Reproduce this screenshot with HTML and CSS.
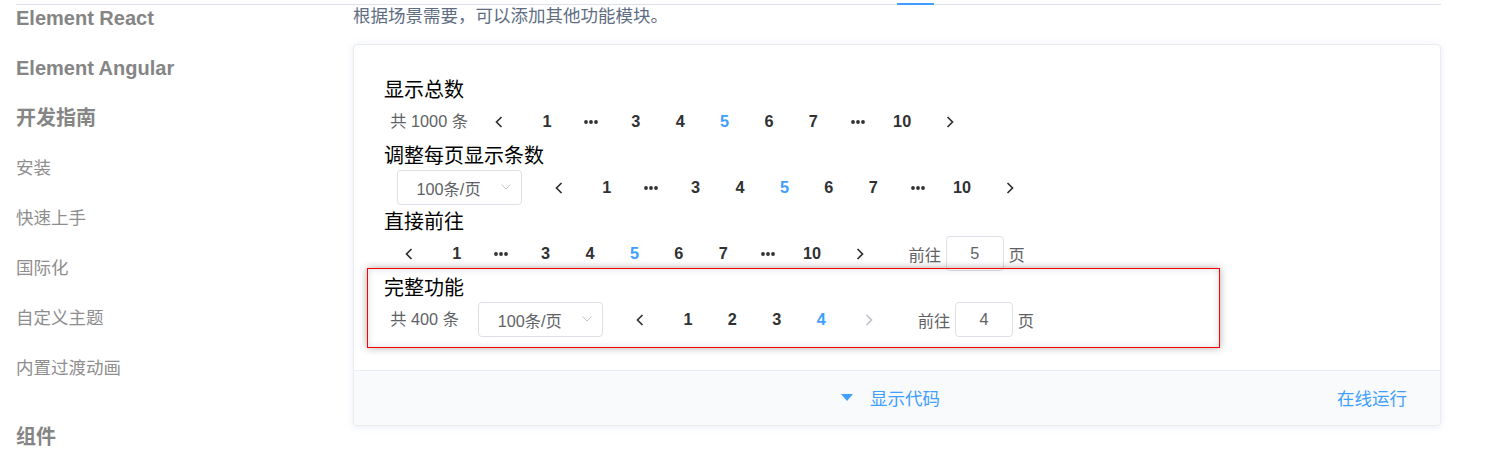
FILE: index.html
```html
<!DOCTYPE html>
<html lang="zh-CN">
<head>
<meta charset="utf-8">
<title>Pagination</title>
<link rel="stylesheet" href="styles.css">
</head>
<body>
<div class="tabs-line"><div class="tabs-active"></div></div>
<div class="page">
  <nav class="side-nav">
    <a class="nav-head">Element React</a>
    <a class="nav-head">Element Angular</a>
    <a class="nav-head">开发指南</a>
    <a class="nav-link">安装</a>
    <a class="nav-link">快速上手</a>
    <a class="nav-link">国际化</a>
    <a class="nav-link">自定义主题</a>
    <a class="nav-link">内置过渡动画</a>
    <a class="nav-head nav-group">组件</a>
  </nav>
  <main class="main">
    <p class="intro">根据场景需要，可以添加其他功能模块。</p>
    <div class="demo-block">
      <div class="source">
        <div class="block">
          <div class="demo-title">显示总数</div>
          <div class="pagination">
            <span class="total">共 1000 条</span>
            <span class="btn btn-prev"><svg class="chev" viewBox="0 0 8 12"><path d="M6.5 1 L1.5 6 L6.5 11"/></svg></span>
            <ul class="pager">
              <li>1</li>
              <li class="more"><svg class="dots" viewBox="0 0 14 4"><circle cx="2" cy="2" r="1.9"/><circle cx="7" cy="2" r="1.9"/><circle cx="12" cy="2" r="1.9"/></svg></li>
              <li>3</li><li>4</li><li class="active">5</li><li>6</li><li>7</li>
              <li class="more"><svg class="dots" viewBox="0 0 14 4"><circle cx="2" cy="2" r="1.9"/><circle cx="7" cy="2" r="1.9"/><circle cx="12" cy="2" r="1.9"/></svg></li>
              <li>10</li>
            </ul>
            <span class="btn btn-next"><svg class="chev" viewBox="0 0 8 12"><path d="M1.5 1 L6.5 6 L1.5 11"/></svg></span>
          </div>
        </div>
        <div class="block">
          <div class="demo-title">调整每页显示条数</div>
          <div class="pagination">
            <span class="sizes"><span class="select"><span>100条/页</span><svg class="caret" viewBox="0 0 10 6"><path d="M0.5 0.5 L5 5 L9.5 0.5"/></svg></span></span>
            <span class="btn btn-prev"><svg class="chev" viewBox="0 0 8 12"><path d="M6.5 1 L1.5 6 L6.5 11"/></svg></span>
            <ul class="pager">
              <li>1</li>
              <li class="more"><svg class="dots" viewBox="0 0 14 4"><circle cx="2" cy="2" r="1.9"/><circle cx="7" cy="2" r="1.9"/><circle cx="12" cy="2" r="1.9"/></svg></li>
              <li>3</li><li>4</li><li class="active">5</li><li>6</li><li>7</li>
              <li class="more"><svg class="dots" viewBox="0 0 14 4"><circle cx="2" cy="2" r="1.9"/><circle cx="7" cy="2" r="1.9"/><circle cx="12" cy="2" r="1.9"/></svg></li>
              <li>10</li>
            </ul>
            <span class="btn btn-next"><svg class="chev" viewBox="0 0 8 12"><path d="M1.5 1 L6.5 6 L1.5 11"/></svg></span>
          </div>
        </div>
        <div class="block">
          <div class="demo-title">直接前往</div>
          <div class="pagination">
            <span class="btn btn-prev"><svg class="chev" viewBox="0 0 8 12"><path d="M6.5 1 L1.5 6 L6.5 11"/></svg></span>
            <ul class="pager">
              <li>1</li>
              <li class="more"><svg class="dots" viewBox="0 0 14 4"><circle cx="2" cy="2" r="1.9"/><circle cx="7" cy="2" r="1.9"/><circle cx="12" cy="2" r="1.9"/></svg></li>
              <li>3</li><li>4</li><li class="active">5</li><li>6</li><li>7</li>
              <li class="more"><svg class="dots" viewBox="0 0 14 4"><circle cx="2" cy="2" r="1.9"/><circle cx="7" cy="2" r="1.9"/><circle cx="12" cy="2" r="1.9"/></svg></li>
              <li>10</li>
            </ul>
            <span class="btn btn-next"><svg class="chev" viewBox="0 0 8 12"><path d="M1.5 1 L6.5 6 L1.5 11"/></svg></span>
            <span class="jump">前往<span class="editor">5</span>页</span>
          </div>
        </div>
        <div class="block">
          <div class="demo-title">完整功能</div>
          <div class="pagination">
            <span class="total">共 400 条</span>
            <span class="sizes"><span class="select"><span>100条/页</span><svg class="caret" viewBox="0 0 10 6"><path d="M0.5 0.5 L5 5 L9.5 0.5"/></svg></span></span>
            <span class="btn btn-prev"><svg class="chev" viewBox="0 0 8 12"><path d="M6.5 1 L1.5 6 L6.5 11"/></svg></span>
            <ul class="pager">
              <li>1</li><li>2</li><li>3</li><li class="active">4</li>
            </ul>
            <span class="btn btn-next is-disabled"><svg class="chev" viewBox="0 0 8 12"><path d="M1.5 1 L6.5 6 L1.5 11"/></svg></span>
            <span class="jump">前往<span class="editor">4</span>页</span>
          </div>
        </div>
      </div>
      <div class="control">
        <span class="control-main"><svg class="caret-bottom" viewBox="0 0 12 7"><path d="M0 0 H12 L6 7 Z"/></svg><span class="control-text">显示代码</span></span>
        <span class="control-run">在线运行</span>
      </div>
      <div class="highlight"></div>
    </div>
  </main>
</div>
</body>
</html>
```
FILE: styles.css
```css
html, body {
  margin: 0;
  padding: 0;
  background: #fff;
  overflow: hidden;
}
body {
  font-family: "Liberation Sans", "Noto Sans CJK SC", sans-serif;
  color: #303133;
}

.tabs-line {
  position: fixed;
  top: 4px;
  left: 16px;
  width: 1425px;
  height: 1px;
  background: #dcdfe6;
  z-index: 2;
}
.tabs-active {
  margin-left: 881px;
  margin-top: -1px;
  width: 37px;
  height: 2px;
  background: #409eff;
}

.page {
  display: grid;
  grid-template-columns: 337px 1088px;
  padding-left: 16px;
}

.side-nav {
  display: flex;
  flex-direction: column;
  margin-top: -7px;
}
.nav-head {
  font-size: 20px;
  line-height: 50px;
  font-weight: bold;
  color: #858585;
}
.nav-link {
  font-size: 17.5px;
  line-height: 50px;
  color: #8e8e8e;
}
.nav-group {
  margin-top: 19px;
}

.intro {
  margin: 3px 0 15px;
  font-size: 17.5px;
  line-height: 26px;
  color: #5e6d82;
}

.demo-block {
  position: relative;
  border: 1px solid #ebebeb;
  border-radius: 4px;
  background: #fff;
  box-shadow: 0 0 8px 0 rgba(232, 237, 250, 0.6), 0 2px 4px 0 rgba(232, 237, 250, 0.5);
}
.source {
  padding: 33.5px 30px 30px 30px;
}
.block + .block {
  margin-top: 3px;
}
.demo-title {
  font-size: 20px;
  line-height: 23px;
  color: #000;
}

.pagination {
  display: flex;
  align-items: flex-start;
  padding: 2.5px 6.25px;
  font-size: 16.25px;
  font-weight: bold;
  color: #303133;
  white-space: nowrap;
}
.total {
  margin-right: 12.5px;
  font-weight: normal;
  color: #606266;
  height: 35px;
  line-height: 35px;
}
.btn {
  box-sizing: border-box;
  min-width: 44.4px;
  height: 35px;
  padding: 0 7.5px;
  display: flex;
  align-items: center;
  justify-content: center;
  color: #303133;
}
.btn-prev { padding-right: 15px; }
.btn-next { padding-left: 15px; }
.btn.is-disabled { color: #c0c4cc; }
.chev {
  width: 8px;
  height: 12px;
  fill: none;
  stroke: currentColor;
  stroke-width: 1.7;
}

.pager {
  display: flex;
  margin: 0;
  padding: 0;
  list-style: none;
}
.pager li {
  box-sizing: border-box;
  min-width: 44.4px;
  height: 35px;
  line-height: 35px;
  padding: 0 5px;
  text-align: center;
}
.pager li.active { color: #409eff; }
.pager li.more {
  display: flex;
  align-items: center;
  justify-content: center;
}
.dots {
  width: 14px;
  height: 4px;
  fill: #303133;
}

.sizes {
  margin-right: 12.5px;
}
.select {
  box-sizing: border-box;
  width: 125px;
  height: 35px;
  margin: 0 6.25px;
  padding: 0 10px 0 19px;
  border: 1px solid #dcdfe6;
  border-radius: 3.75px;
  display: flex;
  align-items: center;
  justify-content: space-between;
  font-weight: normal;
  color: #606266;
}
.caret {
  width: 10px;
  height: 6px;
  margin-top: -1px;
  fill: none;
  stroke: #c0c4cc;
  stroke-width: 1;
}

.jump {
  margin-left: 30px;
  display: flex;
  align-items: center;
  height: 35px;
  font-weight: normal;
  color: #606266;
}
.editor {
  box-sizing: border-box;
  width: 57.5px;
  height: 35px;
  margin: 0 5px;
  border: 1px solid #dcdfe6;
  border-radius: 3.75px;
  display: flex;
  align-items: center;
  justify-content: center;
}

.control {
  box-sizing: border-box;
  height: 55px;
  border-top: 1px solid #eaeefb;
  background: #f9fafc;
  border-radius: 0 0 4px 4px;
  display: grid;
  grid-template-columns: 1fr auto 1fr;
  align-items: center;
  font-size: 17.5px;
  color: #409eff;
}
.control-main {
  grid-column: 2;
  display: flex;
  align-items: center;
  margin-right: 13px;
}
.caret-bottom {
  width: 12px;
  height: 7px;
  fill: #409eff;
  margin-right: 17px;
}
.control-run {
  grid-column: 3;
  justify-self: end;
  padding-right: 33px;
}

.highlight {
  position: absolute;
  left: 13px;
  top: 223px;
  width: 853px;
  height: 80px;
  box-sizing: border-box;
  border: 1px solid #f00;
  box-shadow: 0 0 8px rgba(0, 0, 0, 0.32), inset 0 0 7px rgba(0, 0, 0, 0.14);
  pointer-events: none;
}
```
